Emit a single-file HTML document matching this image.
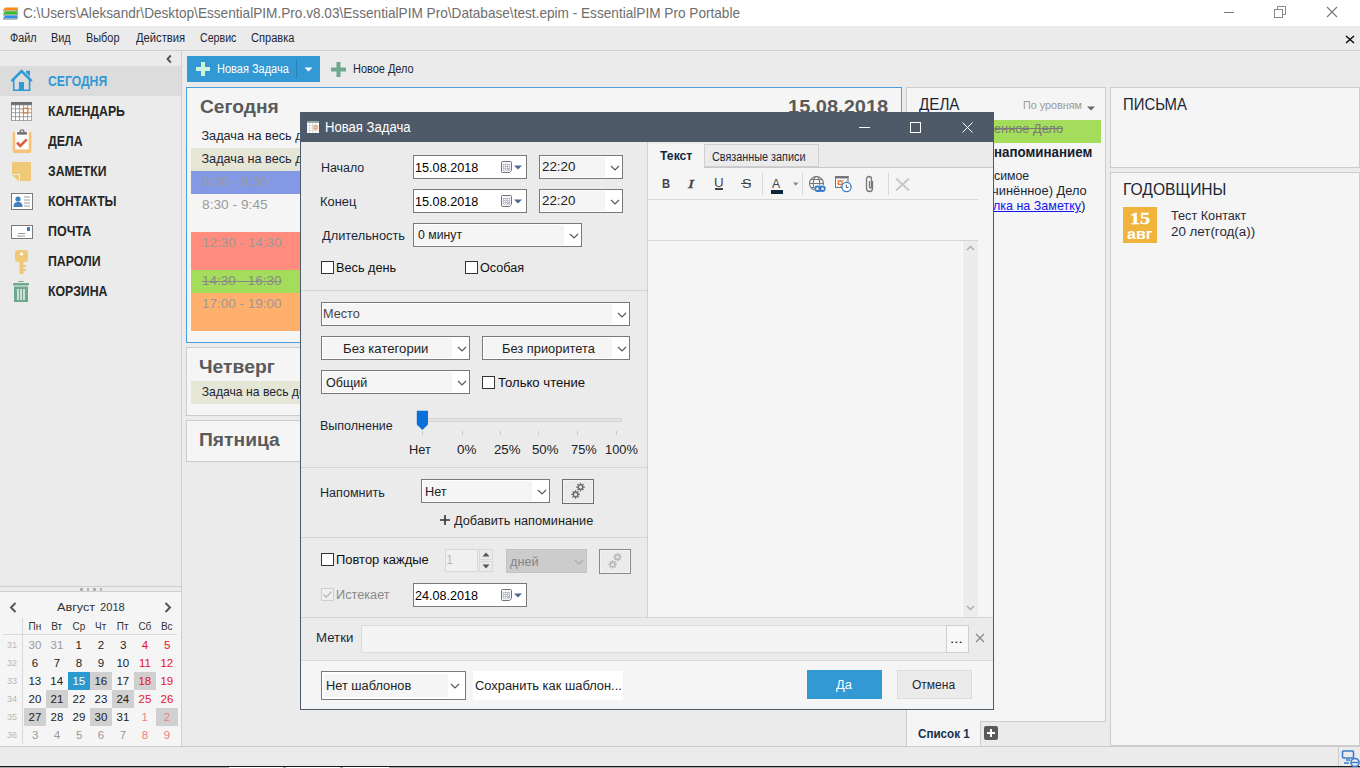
<!DOCTYPE html>
<html><head><meta charset="utf-8"><style>
html,body{margin:0;padding:0;}
body{width:1360px;height:768px;position:relative;overflow:hidden;background:#ebebeb;font-family:"Liberation Sans",sans-serif;}
.b{position:absolute;display:block;}
.t{position:absolute;white-space:nowrap;line-height:1;transform-origin:0 0;}
</style></head><body>
<div class="b" style="left:0px;top:0px;width:1360px;height:26px;background:#ffffff;"></div>
<div class="b" style="left:0px;top:26px;width:1360px;height:24px;background:#ebebeb;"></div>
<div class="b" style="left:0px;top:50px;width:1360px;height:1px;background:#cfcfcf;"></div>
<div class="b" style="left:0px;top:51px;width:1360px;height:695px;background:#ebebeb;"></div>
<svg class="b" style="left:2px;top:6px;" width="18" height="15" viewBox="0 0 18 15"><g fill="#777"><path d="M1 4.5H14L16 2.5V4L14.5 5.5H1Z"/><path d="M1 8.5H14L16 6.5V8L14.5 9.5H1Z"/><path d="M1 12.5H14L16 10.5V12L14.5 13.5H1Z"/></g><path d="M3 1.5H16.5L14 4.2H1Z" fill="#f88c10"/><path d="M3 5.5H16.5L14 8.2H1Z" fill="#30c020"/><path d="M3 9.5H16.5L14 12.2H1Z" fill="#3090f0"/></svg>
<div class="t" style="left:22.52px;top:6.00px;font-size:14.3px;color:#6e6e6e;transform:scaleX(0.9529);">C:\Users\Aleksandr\Desktop\EssentialPIM.Pro.v8.03\EssentialPIM Pro\Database\test.epim - EssentialPIM Pro Portable</div>
<div class="b" style="left:1224px;top:12px;width:10px;height:1px;background:#777;"></div>
<svg class="b" style="left:1274px;top:6px;" width="12" height="12" viewBox="0 0 12 12"><rect x="0.5" y="3.5" width="8" height="8" fill="none" stroke="#888"/><path d="M3.5 3.5V0.5H11.5V8.5H8.5" fill="none" stroke="#888"/></svg>
<svg class="b" style="left:1326px;top:6px;" width="12" height="12" viewBox="0 0 12 12"><path d="M1 1L11 11M11 1L1 11" stroke="#777" stroke-width="1.1"/></svg>
<div class="t" style="left:10.07px;top:32.00px;font-size:12.5px;color:#1b2736;transform:scaleX(0.8644);">Файл</div>
<div class="t" style="left:51.13px;top:32.00px;font-size:12.5px;color:#1b2736;transform:scaleX(0.8721);">Вид</div>
<div class="t" style="left:86.13px;top:32.00px;font-size:12.5px;color:#1b2736;transform:scaleX(0.8716);">Выбор</div>
<div class="t" style="left:135.75px;top:32.00px;font-size:12.5px;color:#1b2736;transform:scaleX(0.8981);">Действия</div>
<div class="t" style="left:200.07px;top:32.00px;font-size:12.5px;color:#1b2736;transform:scaleX(0.8512);">Сервис</div>
<div class="t" style="left:250.81px;top:32.00px;font-size:12.5px;color:#1b2736;transform:scaleX(0.8866);">Справка</div>
<svg class="b" style="left:1345px;top:35px;" width="10" height="9" viewBox="0 0 10 9"><path d="M1 1L9 8M9 1L1 8" stroke="#111" stroke-width="1.6"/></svg>
<div class="b" style="left:181px;top:51px;width:1px;height:695px;background:#d0d0d0;"></div>
<svg class="b" style="left:165px;top:54px;" width="8" height="10" viewBox="0 0 8 10"><path d="M5.8 1.5L2.5 5L5.8 8.5" fill="none" stroke="#555" stroke-width="1.9"/></svg>
<div class="b" style="left:0px;top:66px;width:181px;height:30px;background:#dcdcdc;"></div>
<div class="t" style="left:47.87px;top:74.00px;font-size:14px;color:#3399d4;font-weight:bold;transform:scaleX(0.8689);">СЕГОДНЯ</div>
<div class="t" style="left:47.64px;top:104.00px;font-size:14px;color:#262626;font-weight:bold;transform:scaleX(0.8786);">КАЛЕНДАРЬ</div>
<div class="t" style="left:48.30px;top:134.00px;font-size:14px;color:#262626;font-weight:bold;transform:scaleX(0.8846);">ДЕЛА</div>
<div class="t" style="left:48.08px;top:164.00px;font-size:14px;color:#262626;font-weight:bold;transform:scaleX(0.8712);">ЗАМЕТКИ</div>
<div class="t" style="left:47.64px;top:194.00px;font-size:14px;color:#262626;font-weight:bold;transform:scaleX(0.8740);">КОНТАКТЫ</div>
<div class="t" style="left:47.63px;top:224.00px;font-size:14px;color:#262626;font-weight:bold;transform:scaleX(0.8905);">ПОЧТА</div>
<div class="t" style="left:47.64px;top:254.00px;font-size:14px;color:#262626;font-weight:bold;transform:scaleX(0.8807);">ПАРОЛИ</div>
<div class="t" style="left:47.64px;top:284.00px;font-size:14px;color:#262626;font-weight:bold;transform:scaleX(0.8797);">КОРЗИНА</div>
<svg class="b" style="left:10px;top:68px;" width="24" height="24" viewBox="0 0 24 24"><path d="M1.5 13.2L11.6 3L21.7 13.2" fill="none" stroke="#2e9ad8" stroke-width="2.6" stroke-linejoin="miter"/><path d="M16 4.5V2.8H20V8.8Z" fill="#2e9ad8"/><path d="M3.7 12V22.2H19.6V12" fill="none" stroke="#2e9ad8" stroke-width="1.6"/><rect x="8.9" y="14" width="5.1" height="9" fill="#2e9ad8"/></svg>
<svg class="b" style="left:11px;top:102px;" width="21" height="19" viewBox="0 0 21 19"><rect x="0" y="0" width="21" height="19" fill="#8a8a8a"/><rect x="0" y="0" width="21" height="2.6" fill="#6e6e6e"/><rect x="0.90" y="3.30" width="3.25" height="3.15" fill="#fff"/><rect x="0.90" y="7.25" width="3.25" height="3.15" fill="#fff"/><rect x="0.90" y="11.20" width="3.25" height="3.15" fill="#fff"/><rect x="0.90" y="15.15" width="3.25" height="3.15" fill="#fff"/><rect x="4.95" y="3.30" width="3.25" height="3.15" fill="#fff"/><rect x="4.95" y="7.25" width="3.25" height="3.15" fill="#fff"/><rect x="4.95" y="11.20" width="3.25" height="3.15" fill="#fff"/><rect x="4.95" y="15.15" width="3.25" height="3.15" fill="#fff"/><rect x="9.00" y="3.30" width="3.25" height="3.15" fill="#fff"/><rect x="9.00" y="7.25" width="3.25" height="3.15" fill="#fff"/><rect x="9.00" y="11.20" width="3.25" height="3.15" fill="#fff"/><rect x="9.00" y="15.15" width="3.25" height="3.15" fill="#fff"/><rect x="13.05" y="3.30" width="3.25" height="3.15" fill="#fff"/><rect x="13.05" y="7.25" width="3.25" height="3.15" fill="#fff"/><rect x="13.05" y="11.20" width="3.25" height="3.15" fill="#fff"/><rect x="13.05" y="15.15" width="3.25" height="3.15" fill="#fff"/><rect x="17.10" y="3.30" width="3.25" height="3.15" fill="#fff"/><rect x="17.10" y="7.25" width="3.25" height="3.15" fill="#fff"/><rect x="17.10" y="11.20" width="3.25" height="3.15" fill="#fff"/><rect x="17.10" y="15.15" width="3.25" height="3.15" fill="#fff"/><rect x="12.3" y="6.4" width="4.6" height="4.4" fill="#fff" stroke="#e07a2c" stroke-width="1.3"/></svg>
<svg class="b" style="left:12px;top:129px;" width="20" height="24" viewBox="0 0 20 24"><path d="M2 3V21.5Q2 23 3.5 23H16.5Q18 23 18 21.5V3" fill="none" stroke="#f9c278" stroke-width="2.4"/><rect x="3.2" y="3" width="13.6" height="17.5" fill="#fff"/><path d="M0.8 3H3.2V20.5H16.8V3H19.2V21.5Q19.2 24 17 24H3Q0.8 24 0.8 21.5Z" fill="#f9c278"/><rect x="5" y="3.2" width="10" height="2.4" fill="#6e6e6e"/><circle cx="10" cy="2.8" r="1.9" fill="none" stroke="#6e6e6e" stroke-width="1.3"/><path d="M5 13.5L8.3 16.8L14.8 10.3" fill="none" stroke="#de5c38" stroke-width="2.6"/></svg>
<svg class="b" style="left:11px;top:161px;" width="21" height="21" viewBox="0 0 21 21"><path d="M1 1H20V20H9V13H1Z" fill="#efc878"/><path d="M1 14H8V20.5Z" fill="#efc878"/></svg>
<svg class="b" style="left:11px;top:193px;" width="22" height="17" viewBox="0 0 22 17"><rect x="0.5" y="0.5" width="21" height="16" fill="#fff" stroke="#7a7a7a"/><circle cx="7" cy="6" r="2.6" fill="#3f7fc0"/><path d="M2.5 14C2.5 10 4.5 9 7 9C9.5 9 11.5 10 11.5 14Z" fill="#3f7fc0"/><path d="M13 4H19M13 7H19M13 10H19M13 13H19" stroke="#9a9a9a" stroke-width="1"/></svg>
<svg class="b" style="left:11px;top:225px;" width="22" height="14" viewBox="0 0 22 14"><rect x="0.5" y="0.5" width="21" height="13" fill="#fff" stroke="#7a7a7a"/><rect x="16" y="2" width="3" height="4" fill="#3f7fc0"/><path d="M7 8.5H14M6 11H14" stroke="#9a9a9a" stroke-width="1"/></svg>
<svg class="b" style="left:15px;top:250px;" width="13" height="24" viewBox="0 0 13 24"><rect x="0" y="0" width="13" height="12" rx="3" fill="#f0c878"/><circle cx="6.5" cy="4" r="1.6" fill="#fff"/><rect x="4.5" y="11" width="4" height="13" fill="#f0c878"/><rect x="8" y="15" width="3" height="2" fill="#f0c878"/><rect x="8" y="19" width="3" height="2" fill="#f0c878"/></svg>
<svg class="b" style="left:12px;top:281px;" width="18" height="21" viewBox="0 0 18 21"><rect x="6.5" y="0" width="5" height="1" fill="#6fa890"/><rect x="1" y="2" width="16" height="2.6" rx="0.8" fill="#6fa890"/><rect x="2" y="5.5" width="14" height="15.5" fill="#6fa890"/><path d="M6 8V19M9 8V19M12 8V19" stroke="#fff" stroke-width="1.3"/></svg>
<div class="b" style="left:0px;top:586px;width:182px;height:1px;background:#cccccc;"></div>
<div class="b" style="left:80.0px;top:588px;width:2.5px;height:2.5px;background:#aaaaaa;border-radius:50%;"></div>
<div class="b" style="left:86.5px;top:588px;width:2.5px;height:2.5px;background:#aaaaaa;border-radius:50%;"></div>
<div class="b" style="left:93.0px;top:588px;width:2.5px;height:2.5px;background:#aaaaaa;border-radius:50%;"></div>
<div class="b" style="left:99.5px;top:588px;width:2.5px;height:2.5px;background:#aaaaaa;border-radius:50%;"></div>
<div class="b" style="left:0px;top:591px;width:182px;height:155px;background:#f5f5f5;"></div>
<div class="b" style="left:0px;top:591px;width:182px;height:1px;background:#d0d0d0;"></div>
<div class="b" style="left:181px;top:591px;width:1px;height:155px;background:#d0d0d0;"></div>
<svg class="b" style="left:9px;top:602px;" width="8" height="11" viewBox="0 0 8 11"><path d="M6.5 1L2 5.5L6.5 10" fill="none" stroke="#555" stroke-width="2"/></svg>
<svg class="b" style="left:164px;top:602px;" width="8" height="11" viewBox="0 0 8 11"><path d="M1.5 1L6 5.5L1.5 10" fill="none" stroke="#555" stroke-width="2"/></svg>
<div class="t" style="left:57.00px;top:602.00px;font-size:11.5px;color:#333;transform:scaleX(1.1014);">Август</div>
<div class="t" style="left:99.52px;top:602.00px;font-size:11.5px;color:#333;transform:scaleX(0.9697);">2018</div>
<div class="b" style="left:22px;top:618px;width:1px;height:126px;background:#d8d8d8;"></div>
<div class="b" style="left:3px;top:634px;width:174px;height:1px;background:#d8d8d8;"></div>
<div class="t" style="left:28.50px;top:622.00px;font-size:10px;color:#333;">Пн</div>
<div class="t" style="left:51.25px;top:622.00px;font-size:10px;color:#333;">Вт</div>
<div class="t" style="left:72.50px;top:622.00px;font-size:10px;color:#333;">Ср</div>
<div class="t" style="left:95.00px;top:622.00px;font-size:10px;color:#333;">Чт</div>
<div class="t" style="left:116.75px;top:622.00px;font-size:10px;color:#333;">Пт</div>
<div class="t" style="left:138.38px;top:622.00px;font-size:10px;color:#333;">Сб</div>
<div class="t" style="left:160.88px;top:622.00px;font-size:10px;color:#333;">Вс</div>
<div class="t" style="left:7.00px;top:641.00px;font-size:9px;color:#b8b8b8;">31</div>
<div class="t" style="left:28.62px;top:640.00px;font-size:11.5px;color:#999999;">30</div>
<div class="t" style="left:50.62px;top:640.00px;font-size:11.5px;color:#999999;">31</div>
<div class="t" style="left:75.62px;top:640.00px;font-size:11.5px;color:#222222;">1</div>
<div class="t" style="left:97.75px;top:640.00px;font-size:11.5px;color:#222222;">2</div>
<div class="t" style="left:119.88px;top:640.00px;font-size:11.5px;color:#222222;">3</div>
<div class="t" style="left:141.75px;top:640.00px;font-size:11.5px;color:#e8141e;">4</div>
<div class="t" style="left:163.88px;top:640.00px;font-size:11.5px;color:#e8141e;">5</div>
<div class="t" style="left:7.00px;top:659.00px;font-size:9px;color:#b8b8b8;">32</div>
<div class="t" style="left:31.75px;top:658.00px;font-size:11.5px;color:#222222;">6</div>
<div class="t" style="left:53.75px;top:658.00px;font-size:11.5px;color:#222222;">7</div>
<div class="t" style="left:75.75px;top:658.00px;font-size:11.5px;color:#222222;">8</div>
<div class="t" style="left:97.75px;top:658.00px;font-size:11.5px;color:#222222;">9</div>
<div class="t" style="left:116.38px;top:658.00px;font-size:11.5px;color:#222222;">10</div>
<div class="t" style="left:138.88px;top:658.00px;font-size:11.5px;color:#e8141e;">11</div>
<div class="t" style="left:160.38px;top:658.00px;font-size:11.5px;color:#e8141e;">12</div>
<div class="t" style="left:7.00px;top:677.00px;font-size:9px;color:#b8b8b8;">33</div>
<div class="t" style="left:28.38px;top:676.00px;font-size:11.5px;color:#222222;">13</div>
<div class="t" style="left:50.25px;top:676.00px;font-size:11.5px;color:#222222;">14</div>
<div class="b" style="left:68px;top:672px;width:22px;height:18px;background:#2b9ad0;"></div>
<div class="t" style="left:72.38px;top:676.00px;font-size:11.5px;color:#ffffff;">15</div>
<div class="b" style="left:90px;top:672px;width:22px;height:18px;background:#d0d0d0;"></div>
<div class="t" style="left:94.38px;top:676.00px;font-size:11.5px;color:#222222;">16</div>
<div class="t" style="left:116.38px;top:676.00px;font-size:11.5px;color:#222222;">17</div>
<div class="b" style="left:134px;top:672px;width:22px;height:18px;background:#d0d0d0;"></div>
<div class="t" style="left:138.38px;top:676.00px;font-size:11.5px;color:#e8141e;">18</div>
<div class="t" style="left:160.38px;top:676.00px;font-size:11.5px;color:#e8141e;">19</div>
<div class="t" style="left:7.00px;top:695.00px;font-size:9px;color:#b8b8b8;">34</div>
<div class="t" style="left:28.50px;top:694.00px;font-size:11.5px;color:#222222;">20</div>
<div class="b" style="left:46px;top:690px;width:22px;height:18px;background:#d0d0d0;"></div>
<div class="t" style="left:50.50px;top:694.00px;font-size:11.5px;color:#222222;">21</div>
<div class="t" style="left:72.50px;top:694.00px;font-size:11.5px;color:#222222;">22</div>
<div class="t" style="left:94.50px;top:694.00px;font-size:11.5px;color:#222222;">23</div>
<div class="b" style="left:112px;top:690px;width:22px;height:18px;background:#d0d0d0;"></div>
<div class="t" style="left:116.38px;top:694.00px;font-size:11.5px;color:#222222;">24</div>
<div class="t" style="left:138.50px;top:694.00px;font-size:11.5px;color:#e8141e;">25</div>
<div class="t" style="left:160.50px;top:694.00px;font-size:11.5px;color:#e8141e;">26</div>
<div class="t" style="left:7.00px;top:713.00px;font-size:9px;color:#b8b8b8;">35</div>
<div class="b" style="left:24px;top:708px;width:22px;height:18px;background:#d0d0d0;"></div>
<div class="t" style="left:28.50px;top:712.00px;font-size:11.5px;color:#222222;">27</div>
<div class="t" style="left:50.50px;top:712.00px;font-size:11.5px;color:#222222;">28</div>
<div class="t" style="left:72.50px;top:712.00px;font-size:11.5px;color:#222222;">29</div>
<div class="b" style="left:90px;top:708px;width:22px;height:18px;background:#d0d0d0;"></div>
<div class="t" style="left:94.62px;top:712.00px;font-size:11.5px;color:#222222;">30</div>
<div class="t" style="left:116.62px;top:712.00px;font-size:11.5px;color:#222222;">31</div>
<div class="t" style="left:141.62px;top:712.00px;font-size:11.5px;color:#f08080;">1</div>
<div class="b" style="left:156px;top:708px;width:22px;height:18px;background:#d0d0d0;"></div>
<div class="t" style="left:163.75px;top:712.00px;font-size:11.5px;color:#f08080;">2</div>
<div class="t" style="left:7.00px;top:731.00px;font-size:9px;color:#b8b8b8;">36</div>
<div class="t" style="left:31.88px;top:730.00px;font-size:11.5px;color:#999999;">3</div>
<div class="t" style="left:53.75px;top:730.00px;font-size:11.5px;color:#999999;">4</div>
<div class="t" style="left:75.88px;top:730.00px;font-size:11.5px;color:#999999;">5</div>
<div class="t" style="left:97.75px;top:730.00px;font-size:11.5px;color:#999999;">6</div>
<div class="t" style="left:119.75px;top:730.00px;font-size:11.5px;color:#999999;">7</div>
<div class="t" style="left:141.75px;top:730.00px;font-size:11.5px;color:#f08080;">8</div>
<div class="t" style="left:163.75px;top:730.00px;font-size:11.5px;color:#f08080;">9</div>
<div class="b" style="left:0px;top:746px;width:1360px;height:1px;background:#cccccc;"></div>
<div class="b" style="left:0px;top:747px;width:1360px;height:19px;background:#ebebeb;"></div>
<div class="b" style="left:0px;top:766px;width:1360px;height:1px;background:#1a1a1a;"></div>
<div class="b" style="left:0px;top:767px;width:1360px;height:1px;background:#a8a8ae;"></div>
<div class="b" style="left:229px;top:767px;width:54px;height:1px;background:#ffffff;"></div>
<div class="b" style="left:286px;top:767px;width:54px;height:1px;background:#ffffff;"></div>
<div class="b" style="left:343px;top:767px;width:46px;height:1px;background:#ffffff;"></div>
<div class="b" style="left:1338px;top:747px;width:1px;height:19px;background:#cccccc;"></div>
<svg class="b" style="left:1341px;top:750px;" width="19" height="17" viewBox="0 0 19 17"><rect x="1.5" y="1" width="11" height="7" rx="1" fill="none" stroke="#3a7cc8" stroke-width="1.6"/><path d="M5 10H9M3 13H8" stroke="#3a7cc8" stroke-width="1.6"/><circle cx="14" cy="12.5" r="4" fill="none" stroke="#3a7cc8" stroke-width="1.6"/><path d="M11 12.5H17" stroke="#3a7cc8" stroke-width="1.4"/></svg>
<div class="b" style="left:187px;top:56px;width:133px;height:26px;background:#3399d4;"></div>
<div class="b" style="left:296px;top:60px;width:1px;height:18px;background:#2a7fb3;"></div>
<svg class="b" style="left:195px;top:61px;" width="16" height="16" viewBox="0 0 16 16"><rect x="6" y="1" width="4" height="14" fill="#ccf5dc"/><rect x="1" y="6" width="14" height="4" fill="#ccf5dc"/></svg>
<div class="t" style="left:217.37px;top:63.00px;font-size:12.5px;color:#ffffff;transform:scaleX(0.8793);">Новая Задача</div>
<svg class="b" style="left:304px;top:67px;" width="9" height="5" viewBox="0 0 9 5"><path d="M0.5 0.5H8.5L4.5 4.5Z" fill="#ffffff"/></svg>
<svg class="b" style="left:331px;top:62px;" width="15" height="15" viewBox="0 0 15 15"><rect x="5.5" y="0" width="4" height="15" fill="#6fa88f"/><rect x="0" y="5.5" width="15" height="4" fill="#6fa88f"/></svg>
<div class="t" style="left:352.72px;top:63.00px;font-size:12.5px;color:#1b2736;transform:scaleX(0.8768);">Новое Дело</div>
<div class="b" style="left:186px;top:87px;width:716px;height:256px;background:#f5f5f5;box-shadow:inset 0 0 0 1px #4aa0e0;"></div>
<div class="t" style="left:199.97px;top:98.00px;font-size:18px;color:#5a5a5a;font-weight:bold;transform:scaleX(1.0667);">Сегодня</div>
<div class="t" style="left:787.89px;top:98.00px;font-size:18px;color:#5a5a5a;font-weight:bold;transform:scaleX(1.1119);">15.08.2018</div>
<div class="t" style="left:201.45px;top:130.00px;font-size:12.7px;color:#1b2736;">Задача на весь день</div>
<div class="b" style="left:191px;top:148px;width:706px;height:23px;background:#e6e6d6;"></div>
<div class="t" style="left:201.45px;top:153.00px;font-size:12.7px;color:#1b2736;">Задача на весь день</div>
<div class="b" style="left:191px;top:171px;width:706px;height:23px;background:#8399e6;"></div>
<div class="t" style="left:201.96px;top:176.00px;font-size:12.7px;color:#9a9a9a;transform:scaleX(1.0826);">8:30 - 9:30</div>
<div class="t" style="left:201.96px;top:199.00px;font-size:12.7px;color:#9a9a9a;transform:scaleX(1.0826);">8:30 - 9:45</div>
<div class="b" style="left:191px;top:232px;width:706px;height:38px;background:#ff8c7c;"></div>
<div class="t" style="left:201.90px;top:237.00px;font-size:12.7px;color:#9a9a9a;transform:scaleX(1.0650);">12:30 - 14:30</div>
<div class="b" style="left:191px;top:270px;width:706px;height:23px;background:#a4dc5c;"></div>
<div class="t" style="left:201.90px;top:275.00px;font-size:12.7px;color:#8a8a8a;transform:scaleX(1.0650);text-decoration:line-through;">14:30 - 16:30</div>
<div class="b" style="left:191px;top:293px;width:706px;height:38px;background:#ffb06c;"></div>
<div class="t" style="left:201.90px;top:298.00px;font-size:12.7px;color:#9a9a9a;transform:scaleX(1.0650);">17:00 - 19:00</div>
<div class="b" style="left:186px;top:347px;width:716px;height:69px;background:#f5f5f5;box-shadow:inset 0 0 0 1px #cccccc;"></div>
<div class="t" style="left:199.39px;top:358.00px;font-size:18px;color:#5a5a5a;font-weight:bold;transform:scaleX(1.0748);">Четверг</div>
<div class="b" style="left:191px;top:381px;width:706px;height:23px;background:#e6e6d6;"></div>
<div class="t" style="left:201.75px;top:386.00px;font-size:12.2px;color:#1b2736;">Задача на весь день</div>
<div class="b" style="left:186px;top:420px;width:716px;height:42px;background:#f5f5f5;box-shadow:inset 0 0 0 1px #cccccc;"></div>
<div class="t" style="left:199.13px;top:431.00px;font-size:18px;color:#5a5a5a;font-weight:bold;transform:scaleX(1.0702);">Пятница</div>
<div class="b" style="left:906px;top:87px;width:200px;height:635px;background:#f5f5f5;box-shadow:inset 0 0 0 1px #cccccc;"></div>
<div class="t" style="left:919.30px;top:96.00px;font-size:17px;color:#1b2736;transform:scaleX(0.8923);">ДЕЛА</div>
<div class="t" style="left:1022.68px;top:100.00px;font-size:11.3px;color:#9a9a9a;transform:scaleX(0.9558);">По уровням</div>
<svg class="b" style="left:1087px;top:106px;" width="8" height="5" viewBox="0 0 8 5"><path d="M0 0.5H8L4 4.5Z" fill="#666"/></svg>
<div class="b" style="left:911px;top:120px;width:190px;height:23px;background:#a4dc5c;"></div>
<div class="t" style="left:994.11px;top:122.00px;font-size:13px;color:#7a7a7a;transform:scaleX(0.9834);text-decoration:line-through;">енное Дело</div>
<div class="t" style="left:993.79px;top:145.00px;font-size:14px;color:#14202c;font-weight:bold;transform:scaleX(0.9514);">напоминанием</div>
<div class="t" style="left:993.84px;top:169.00px;font-size:13.6px;color:#1b2736;transform:scaleX(0.9053);">симое</div>
<div class="t" style="left:992.29px;top:184.00px;font-size:13.6px;color:#1b2736;transform:scaleX(0.9457);">чинённое) Дело</div>
<div class="t" style="left:992.50px;top:199.00px;font-size:13.6px;color:#1414ee;transform:scaleX(0.9195);text-decoration:underline;">лка на Заметку</div>
<div class="t" style="left:1081.00px;top:199.00px;font-size:13.6px;color:#1b2736;">)</div>
<div class="b" style="left:906px;top:721px;width:200px;height:25px;background:#ebebeb;"></div>
<div class="b" style="left:906px;top:721px;width:1px;height:25px;background:#cccccc;"></div>
<div class="b" style="left:906px;top:721px;width:74px;height:25px;background:#f5f5f5;"></div>
<div class="b" style="left:906px;top:721px;width:1px;height:25px;background:#cccccc;"></div>
<div class="b" style="left:980px;top:721px;width:126px;height:1px;background:#cccccc;"></div>
<div class="b" style="left:980px;top:721px;width:1px;height:25px;background:#cccccc;"></div>
<div class="t" style="left:917.53px;top:728.00px;font-size:12.5px;color:#14304c;font-weight:bold;transform:scaleX(0.9315);">Список 1</div>
<svg class="b" style="left:984px;top:726px;" width="14" height="14" viewBox="0 0 14 14"><rect x="0" y="0" width="14" height="14" rx="2" fill="#5a5a5a"/><path d="M7 3V11M3 7H11" stroke="#fff" stroke-width="2"/></svg>
<div class="b" style="left:1110px;top:87px;width:250px;height:81px;background:#f5f5f5;box-shadow:inset 0 0 0 1px #cccccc;"></div>
<div class="t" style="left:1123.11px;top:96.00px;font-size:17px;color:#1b2736;transform:scaleX(0.8750);">ПИСЬМА</div>
<div class="b" style="left:1110px;top:172px;width:250px;height:574px;background:#f5f5f5;box-shadow:inset 0 0 0 1px #cccccc;"></div>
<div class="t" style="left:1123.05px;top:181.00px;font-size:17px;color:#1b2736;transform:scaleX(0.9182);">ГОДОВЩИНЫ</div>
<div class="b" style="left:1123px;top:207px;width:34px;height:36px;background:#f0b43c;"></div>
<div class="t" style="left:1129.57px;top:211.00px;font-size:16.5px;color:#ffffff;font-weight:bold;font-family:'Liberation Serif',serif;transform:scaleX(1.2203);-webkit-text-stroke:0.3px #fff;">15</div>
<div class="t" style="left:1126.74px;top:226.00px;font-size:15.5px;color:#ffffff;font-weight:bold;transform:scaleX(1.0309);">авг</div>
<div class="t" style="left:1171.25px;top:210.00px;font-size:12.5px;color:#2a2a36;transform:scaleX(1.0135);">Тест Контакт</div>
<div class="t" style="left:1170.97px;top:226.00px;font-size:12.5px;color:#2a2a36;transform:scaleX(1.0675);">20 лет(год(а))</div>
<div class="b" style="left:300px;top:112px;width:694px;height:598px;background:#ebebeb;"></div>
<div class="b" style="left:300px;top:112px;width:694px;height:30px;background:#4f5a68;"></div>
<div class="b" style="left:300px;top:112px;width:1px;height:598px;background:#4f5a68;"></div>
<div class="b" style="left:993px;top:112px;width:1px;height:598px;background:#4f5a68;"></div>
<div class="b" style="left:300px;top:709px;width:694px;height:1px;background:#4f5a68;"></div>
<svg class="b" style="left:307px;top:121px;" width="12" height="12" viewBox="0 0 12 12"><rect x="0" y="0" width="12" height="12" fill="#ffffff"/><rect x="0" y="0" width="12" height="2" fill="#9aa"/><path d="M2.5 2V12" stroke="#ccc" stroke-width="0.6"/><path d="M5.5 2V12" stroke="#ccc" stroke-width="0.6"/><path d="M8.5 2V12" stroke="#ccc" stroke-width="0.6"/><path d="M0 4.5H12" stroke="#ccc" stroke-width="0.6"/><path d="M0 7.0H12" stroke="#ccc" stroke-width="0.6"/><path d="M0 9.5H12" stroke="#ccc" stroke-width="0.6"/><rect x="7" y="5" width="3" height="3" fill="none" stroke="#e8762c" stroke-width="0.8"/></svg>
<div class="t" style="left:325.26px;top:120.00px;font-size:14px;color:#ffffff;transform:scaleX(0.9359);">Новая Задача</div>
<div class="b" style="left:859px;top:127px;width:11px;height:1px;background:#ffffff;"></div>
<svg class="b" style="left:909px;top:121px;" width="13" height="13" viewBox="0 0 13 13"><rect x="1.5" y="1.5" width="10" height="10" fill="none" stroke="#fff" stroke-width="1"/></svg>
<svg class="b" style="left:961px;top:121px;" width="13" height="13" viewBox="0 0 13 13"><path d="M1.5 1.5L11.5 11.5M11.5 1.5L1.5 11.5" stroke="#fff" stroke-width="1"/></svg>
<div class="b" style="left:647px;top:142px;width:346px;height:567px;background:#f5f5f5;"></div>
<div class="b" style="left:647px;top:142px;width:1px;height:475px;background:#d0d0d0;"></div>
<div class="b" style="left:648px;top:142px;width:345px;height:25px;background:#ebebeb;"></div>
<div class="b" style="left:648px;top:167px;width:345px;height:1px;background:#c8c8c8;"></div>
<div class="b" style="left:648px;top:144px;width:56px;height:24px;background:#f5f5f5;"></div>
<div class="b" style="left:704px;top:144px;width:115px;height:23px;background:#ebebeb;box-shadow:inset 0 0 0 1px #cfcfcf;"></div>
<div class="t" style="left:659.80px;top:150.00px;font-size:12.5px;color:#102840;font-weight:bold;transform:scaleX(0.9758);">Текст</div>
<div class="t" style="left:712.37px;top:151.00px;font-size:12.5px;color:#1b2736;transform:scaleX(0.8665);">Связанные записи</div>
<div class="b" style="left:648px;top:199px;width:330px;height:1px;background:#d6d6d6;"></div>
<div class="b" style="left:648px;top:240px;width:330px;height:1px;background:#d6d6d6;"></div>
<div class="b" style="left:963px;top:241px;width:15px;height:376px;background:#ececec;"></div>
<div class="b" style="left:962px;top:241px;width:1px;height:376px;background:#fbfbfb;"></div>
<svg class="b" style="left:966px;top:245px;" width="9" height="6" viewBox="0 0 9 6"><path d="M1 5L4.5 1.5L8 5" fill="none" stroke="#aaa" stroke-width="1.3"/></svg>
<svg class="b" style="left:966px;top:605px;" width="9" height="6" viewBox="0 0 9 6"><path d="M1 1L4.5 4.5L8 1" fill="none" stroke="#aaa" stroke-width="1.3"/></svg>
<div class="t" style="left:661.55px;top:177.00px;font-size:13px;color:#444;font-weight:bold;transform:scaleX(0.8606);">B</div>
<div class="t" style="left:688.33px;top:177.00px;font-size:13.5px;color:#444;font-family:'Liberation Serif',serif;transform:scaleX(1.3091);font-style:italic;-webkit-text-stroke:0.4px #444;">I</div>
<div class="t" style="left:714.16px;top:177.00px;font-size:12px;color:#444;transform:scaleX(1.1143);">U</div>
<div class="b" style="left:715px;top:188px;width:8px;height:1.5px;background:#444;"></div>
<div class="t" style="left:741.55px;top:177.00px;font-size:13px;color:#444;transform:scaleX(1.0968);">S</div>
<div class="b" style="left:741px;top:182.5px;width:10px;height:1.2px;background:#444;"></div>
<div class="b" style="left:762px;top:173px;width:1px;height:22px;background:#d8d8d8;"></div>
<div class="b" style="left:802px;top:173px;width:1px;height:22px;background:#d8d8d8;"></div>
<div class="b" style="left:888px;top:173px;width:1px;height:22px;background:#d8d8d8;"></div>
<div class="t" style="left:772.40px;top:178.00px;font-size:12.5px;color:#444;transform:scaleX(0.9765);">A</div>
<div class="b" style="left:771px;top:190px;width:12px;height:4px;background:#0a2a3a;"></div>
<svg class="b" style="left:793px;top:182px;" width="6" height="4" viewBox="0 0 6 4"><path d="M0 0.5H5.5L2.75 3.8Z" fill="#888"/></svg>
<svg class="b" style="left:808px;top:175px;" width="18" height="18" viewBox="0 0 18 18"><g fill="none" stroke="#777" stroke-width="1.1"><circle cx="8.5" cy="8.5" r="7"/><ellipse cx="8.5" cy="8.5" rx="3.2" ry="7"/><path d="M1.5 8.5H15.5M2.8 4.5H14.2M2.8 12.5H14.2"/></g><rect x="6" y="10" width="12" height="8" fill="#f5f5f5"/><g fill="none" stroke="#3a7cc8" stroke-width="1.8"><rect x="7.2" y="11.5" width="5.5" height="4.5" rx="2.2"/><rect x="11.3" y="11.5" width="5.5" height="4.5" rx="2.2"/></g></svg>
<svg class="b" style="left:834px;top:175px;" width="18" height="18" viewBox="0 0 18 18"><rect x="1.5" y="1.5" width="12.5" height="11" fill="#fff" stroke="#777" stroke-width="1"/><rect x="1" y="1" width="13.5" height="2.5" fill="#777"/><g fill="#aaa"><rect x="3" y="5" width="1" height="1"/><rect x="6" y="5" width="1" height="1"/><rect x="9" y="5" width="1" height="1"/><rect x="12" y="5" width="1" height="1"/><rect x="3" y="8" width="1" height="1"/><rect x="3" y="11" width="1" height="1"/><rect x="6" y="11" width="1" height="1"/></g><rect x="4.5" y="6" width="3.5" height="3.5" fill="none" stroke="#e8762c" stroke-width="1.3"/><circle cx="12.5" cy="12" r="4.6" fill="#fff" stroke="#3a7cc8" stroke-width="1.3"/><path d="M12.3 9.5V12.4H14.5" fill="none" stroke="#555" stroke-width="1"/></svg>
<svg class="b" style="left:864px;top:175px;" width="11" height="18" viewBox="0 0 11 18"><path d="M8.5 6V13.5A3 3 0 0 1 2.5 13.5V4A2.5 2.5 0 0 1 7.5 4V12A1 1 0 0 1 5.5 12V6" fill="none" stroke="#777" stroke-width="1.3"/></svg>
<svg class="b" style="left:895px;top:178px;" width="15" height="13" viewBox="0 0 15 13"><path d="M1 0.5L14 12.5M14 0.5L1 12.5" stroke="#c8c8c8" stroke-width="2"/></svg>
<div class="b" style="left:301px;top:290px;width:346px;height:1px;background:#d5d5d5;"></div>
<div class="b" style="left:301px;top:467px;width:346px;height:1px;background:#d5d5d5;"></div>
<div class="b" style="left:301px;top:537px;width:346px;height:1px;background:#d5d5d5;"></div>
<div class="t" style="left:320.51px;top:162.00px;font-size:12.5px;color:#1b2736;transform:scaleX(0.9929);">Начало</div>
<div class="b" style="left:413px;top:155px;width:114px;height:24px;background:#ffffff;box-shadow:inset 0 0 0 1px #7a7a7a;"></div>
<svg class="b" style="left:501px;top:161px;" width="12" height="13" viewBox="0 0 12 13"><path d="M1.5 0.5H9.5A1 1 0 0 1 10.5 1.5V9.5L8.5 11.5H1.5A1 1 0 0 1 0.5 10.5V1.5A1 1 0 0 1 1.5 0.5Z" fill="#f2f5fb" stroke="#7a7070"/><rect x="2" y="3" width="7" height="6.5" fill="#b4bac8"/><g fill="#fff"><rect x="2.8" y="3.8" width="1.2" height="1.2"/><rect x="4.9" y="3.8" width="1.2" height="1.2"/><rect x="7" y="3.8" width="1.2" height="1.2"/><rect x="2.8" y="5.8" width="1.2" height="1.2"/><rect x="4.9" y="5.8" width="1.2" height="1.2"/><rect x="7" y="5.8" width="1.2" height="1.2"/><rect x="2.8" y="7.8" width="1.2" height="1.2"/><rect x="4.9" y="7.8" width="1.2" height="1.2"/></g></svg>
<svg class="b" style="left:514px;top:165px;" width="8" height="5" viewBox="0 0 8 5"><path d="M0 0.5H8L4 4.5Z" fill="#4a6890"/></svg>
<div class="t" style="left:415.04px;top:162.00px;font-size:12.5px;color:#000;transform:scaleX(1.0122);">15.08.2018</div>
<div class="b" style="left:539px;top:155px;width:84px;height:24px;background:#ffffff;box-shadow:inset 0 0 0 1px #7a7a7a;"></div>
<div class="b" style="left:541px;top:157px;width:64px;height:20px;background:#f5f5f5;"></div>
<svg class="b" style="left:610px;top:165.0px;" width="10" height="6" viewBox="0 0 10 6"><path d="M1 1L5 5L9 1" fill="none" stroke="#555" stroke-width="1.1"/></svg>
<div class="t" style="left:541.87px;top:161.00px;font-size:12.5px;color:#222;transform:scaleX(1.0678);">22:20</div>
<div class="t" style="left:320.47px;top:196.00px;font-size:12.5px;color:#1b2736;transform:scaleX(1.0294);">Конец</div>
<div class="b" style="left:413px;top:189px;width:114px;height:24px;background:#ffffff;box-shadow:inset 0 0 0 1px #7a7a7a;"></div>
<svg class="b" style="left:501px;top:195px;" width="12" height="13" viewBox="0 0 12 13"><path d="M1.5 0.5H9.5A1 1 0 0 1 10.5 1.5V9.5L8.5 11.5H1.5A1 1 0 0 1 0.5 10.5V1.5A1 1 0 0 1 1.5 0.5Z" fill="#f2f5fb" stroke="#7a7070"/><rect x="2" y="3" width="7" height="6.5" fill="#b4bac8"/><g fill="#fff"><rect x="2.8" y="3.8" width="1.2" height="1.2"/><rect x="4.9" y="3.8" width="1.2" height="1.2"/><rect x="7" y="3.8" width="1.2" height="1.2"/><rect x="2.8" y="5.8" width="1.2" height="1.2"/><rect x="4.9" y="5.8" width="1.2" height="1.2"/><rect x="7" y="5.8" width="1.2" height="1.2"/><rect x="2.8" y="7.8" width="1.2" height="1.2"/><rect x="4.9" y="7.8" width="1.2" height="1.2"/></g></svg>
<svg class="b" style="left:514px;top:199px;" width="8" height="5" viewBox="0 0 8 5"><path d="M0 0.5H8L4 4.5Z" fill="#4a6890"/></svg>
<div class="t" style="left:415.04px;top:196.00px;font-size:12.5px;color:#000;transform:scaleX(1.0122);">15.08.2018</div>
<div class="b" style="left:539px;top:189px;width:84px;height:24px;background:#ffffff;box-shadow:inset 0 0 0 1px #7a7a7a;"></div>
<div class="b" style="left:541px;top:191px;width:64px;height:20px;background:#f5f5f5;"></div>
<svg class="b" style="left:610px;top:199.0px;" width="10" height="6" viewBox="0 0 10 6"><path d="M1 1L5 5L9 1" fill="none" stroke="#555" stroke-width="1.1"/></svg>
<div class="t" style="left:541.87px;top:195.00px;font-size:12.5px;color:#222;transform:scaleX(1.0678);">22:20</div>
<div class="t" style="left:321.50px;top:230.00px;font-size:12.5px;color:#1b2736;transform:scaleX(1.0236);">Длительность</div>
<div class="b" style="left:413px;top:223px;width:169px;height:24px;background:#ffffff;box-shadow:inset 0 0 0 1px #7a7a7a;"></div>
<div class="b" style="left:415px;top:225px;width:149px;height:20px;background:#f5f5f5;"></div>
<svg class="b" style="left:569px;top:233.0px;" width="10" height="6" viewBox="0 0 10 6"><path d="M1 1L5 5L9 1" fill="none" stroke="#555" stroke-width="1.1"/></svg>
<div class="t" style="left:418.35px;top:229.00px;font-size:12.5px;color:#222;transform:scaleX(0.9832);">0 минут</div>
<div class="b" style="left:321px;top:261px;width:13px;height:13px;background:#ffffff;box-shadow:inset 0 0 0 1px #333;"></div>
<div class="t" style="left:335.98px;top:262.00px;font-size:12.5px;color:#111;transform:scaleX(1.0165);">Весь день</div>
<div class="b" style="left:465px;top:261px;width:13px;height:13px;background:#ffffff;box-shadow:inset 0 0 0 1px #333;"></div>
<div class="t" style="left:480.49px;top:262.00px;font-size:12.5px;color:#111;transform:scaleX(1.0118);">Особая</div>
<div class="b" style="left:321px;top:302px;width:309px;height:24px;background:#ffffff;box-shadow:inset 0 0 0 1px #7a7a7a;"></div>
<div class="b" style="left:323px;top:304px;width:289px;height:20px;background:#f5f5f5;"></div>
<svg class="b" style="left:617px;top:312.0px;" width="10" height="6" viewBox="0 0 10 6"><path d="M1 1L5 5L9 1" fill="none" stroke="#555" stroke-width="1.1"/></svg>
<div class="t" style="left:323.29px;top:308.00px;font-size:12.5px;color:#444;transform:scaleX(1.0129);">Место</div>
<div class="b" style="left:321px;top:336px;width:149px;height:24px;background:#ffffff;box-shadow:inset 0 0 0 1px #7a7a7a;"></div>
<div class="b" style="left:323px;top:338px;width:129px;height:20px;background:#f5f5f5;"></div>
<svg class="b" style="left:457px;top:346.0px;" width="10" height="6" viewBox="0 0 10 6"><path d="M1 1L5 5L9 1" fill="none" stroke="#555" stroke-width="1.1"/></svg>
<div class="t" style="left:343.25px;top:343.00px;font-size:12.5px;color:#222;transform:scaleX(1.0516);">Без категории</div>
<div class="b" style="left:482px;top:336px;width:148px;height:24px;background:#ffffff;box-shadow:inset 0 0 0 1px #7a7a7a;"></div>
<div class="b" style="left:484px;top:338px;width:128px;height:20px;background:#f5f5f5;"></div>
<svg class="b" style="left:617px;top:346.0px;" width="10" height="6" viewBox="0 0 10 6"><path d="M1 1L5 5L9 1" fill="none" stroke="#555" stroke-width="1.1"/></svg>
<div class="t" style="left:502.27px;top:343.00px;font-size:12.5px;color:#222;transform:scaleX(1.0291);">Без приоритета</div>
<div class="b" style="left:321px;top:370px;width:149px;height:24px;background:#ffffff;box-shadow:inset 0 0 0 1px #7a7a7a;"></div>
<div class="b" style="left:323px;top:372px;width:129px;height:20px;background:#f5f5f5;"></div>
<svg class="b" style="left:457px;top:380.0px;" width="10" height="6" viewBox="0 0 10 6"><path d="M1 1L5 5L9 1" fill="none" stroke="#555" stroke-width="1.1"/></svg>
<div class="t" style="left:325.70px;top:377.00px;font-size:12.5px;color:#222;transform:scaleX(1.0050);">Общий</div>
<div class="b" style="left:482px;top:376px;width:13px;height:13px;background:#ffffff;box-shadow:inset 0 0 0 1px #333;"></div>
<div class="t" style="left:497.84px;top:377.00px;font-size:12.5px;color:#111;transform:scaleX(1.0492);">Только чтение</div>
<div class="t" style="left:320.00px;top:420.00px;font-size:12.5px;color:#1b2736;">Выполнение</div>
<div class="b" style="left:423px;top:418px;width:199px;height:4px;background:#e2e2e2;box-shadow:inset 0 0 0 1px #d4d4d4;"></div>
<svg class="b" style="left:416px;top:410px;" width="13" height="21" viewBox="0 0 13 21"><path d="M0.8 0.8H12V14.5L6.4 20L0.8 14.5Z" fill="#0a6fd8"/></svg>
<div class="b" style="left:422px;top:431px;width:1px;height:4px;background:#c8c8c8;"></div>
<div class="b" style="left:462px;top:431px;width:1px;height:4px;background:#c8c8c8;"></div>
<div class="b" style="left:500px;top:431px;width:1px;height:4px;background:#c8c8c8;"></div>
<div class="b" style="left:538px;top:431px;width:1px;height:4px;background:#c8c8c8;"></div>
<div class="b" style="left:577px;top:431px;width:1px;height:4px;background:#c8c8c8;"></div>
<div class="b" style="left:616px;top:431px;width:1px;height:4px;background:#c8c8c8;"></div>
<div class="t" style="left:408.98px;top:444.00px;font-size:12.5px;color:#222;transform:scaleX(1.0222);">Нет</div>
<div class="t" style="left:456.73px;top:444.00px;font-size:12.5px;color:#222;transform:scaleX(1.0743);">0%</div>
<div class="t" style="left:494.27px;top:444.00px;font-size:12.5px;color:#222;transform:scaleX(1.0598);">25%</div>
<div class="t" style="left:532.37px;top:444.00px;font-size:12.5px;color:#222;transform:scaleX(1.0598);">50%</div>
<div class="t" style="left:570.99px;top:444.00px;font-size:12.5px;color:#222;transform:scaleX(1.0268);">75%</div>
<div class="t" style="left:604.73px;top:444.00px;font-size:12.5px;color:#222;transform:scaleX(1.0276);">100%</div>
<div class="t" style="left:319.99px;top:487.00px;font-size:12.5px;color:#1b2736;transform:scaleX(1.0063);">Напомнить</div>
<div class="b" style="left:421px;top:479px;width:129px;height:24px;background:#ffffff;box-shadow:inset 0 0 0 1px #7a7a7a;"></div>
<div class="b" style="left:423px;top:481px;width:109px;height:20px;background:#f5f5f5;"></div>
<svg class="b" style="left:537px;top:489.0px;" width="10" height="6" viewBox="0 0 10 6"><path d="M1 1L5 5L9 1" fill="none" stroke="#555" stroke-width="1.1"/></svg>
<div class="t" style="left:425.08px;top:486.00px;font-size:12.5px;color:#222;transform:scaleX(1.0173);">Нет</div>
<div class="b" style="left:562px;top:479px;width:32px;height:25px;background:#ebebeb;box-shadow:inset 0 0 0 1px #6e6e6e;"></div>
<div class="b" style="left:563px;top:480px;width:30px;height:23px;background:transparent;box-shadow:inset 0 0 0 1px #f3f3f3;"></div>
<svg class="b" style="left:562px;top:479px;" width="32" height="25" viewBox="0 0 32 25"><path fill-rule="evenodd" fill="#707070" d="M21.36 6.91 L21.54 7.47 L22.86 7.51 L22.86 8.69 L21.54 8.73 L21.36 9.29 L21.09 9.80 L22.00 10.77 L21.17 11.60 L20.20 10.69 L19.69 10.96 L19.13 11.14 L19.09 12.46 L17.91 12.46 L17.87 11.14 L17.31 10.96 L16.80 10.69 L15.83 11.60 L15.00 10.77 L15.91 9.80 L15.64 9.29 L15.46 8.73 L14.14 8.69 L14.14 7.51 L15.46 7.47 L15.64 6.91 L15.91 6.40 L15.00 5.43 L15.83 4.60 L16.80 5.51 L17.31 5.24 L17.87 5.06 L17.91 3.74 L19.09 3.74 L19.13 5.06 L19.69 5.24 L20.20 5.51 L21.17 4.60 L22.00 5.43 L21.09 6.40Z M20.00 8.10 A1.5 1.5 0 1 0 17.00 8.10 A1.5 1.5 0 1 0 20.00 8.10Z M16.46 14.21 L16.64 14.77 L17.96 14.81 L17.96 15.99 L16.64 16.03 L16.46 16.59 L16.19 17.10 L17.10 18.07 L16.27 18.90 L15.30 17.99 L14.79 18.26 L14.23 18.44 L14.19 19.76 L13.01 19.76 L12.97 18.44 L12.41 18.26 L11.90 17.99 L10.93 18.90 L10.10 18.07 L11.01 17.10 L10.74 16.59 L10.56 16.03 L9.24 15.99 L9.24 14.81 L10.56 14.77 L10.74 14.21 L11.01 13.70 L10.10 12.73 L10.93 11.90 L11.90 12.81 L12.41 12.54 L12.97 12.36 L13.01 11.04 L14.19 11.04 L14.23 12.36 L14.79 12.54 L15.30 12.81 L16.27 11.90 L17.10 12.73 L16.19 13.70Z M15.10 15.40 A1.5 1.5 0 1 0 12.10 15.40 A1.5 1.5 0 1 0 15.10 15.40Z"/></svg>
<svg class="b" style="left:440px;top:515px;" width="10" height="10" viewBox="0 0 10 10"><path d="M5 0V10M0 5H10" stroke="#333" stroke-width="1.6"/></svg>
<div class="t" style="left:453.90px;top:515.00px;font-size:12.5px;color:#222;transform:scaleX(1.0199);">Добавить напоминание</div>
<div class="b" style="left:321px;top:553px;width:13px;height:13px;background:#ffffff;box-shadow:inset 0 0 0 1px #333;"></div>
<div class="t" style="left:335.96px;top:554.00px;font-size:12.5px;color:#111;transform:scaleX(1.0364);">Повтор каждые</div>
<div class="b" style="left:445px;top:549px;width:33px;height:23px;background:#f0f0f0;box-shadow:inset 0 0 0 1px #d8d8d8;"></div>
<div class="t" style="left:446.25px;top:554.00px;font-size:12px;color:#b8b8b8;">1</div>
<div class="b" style="left:479px;top:549px;width:14px;height:11px;background:#ebebeb;box-shadow:inset 0 0 0 1px #d8d8d8;"></div>
<div class="b" style="left:479px;top:561px;width:14px;height:11px;background:#ebebeb;box-shadow:inset 0 0 0 1px #d8d8d8;"></div>
<svg class="b" style="left:482px;top:552px;" width="8" height="5" viewBox="0 0 8 5"><path d="M0.5 4.5L4 0.5L7.5 4.5Z" fill="#555"/></svg>
<svg class="b" style="left:482px;top:564px;" width="8" height="5" viewBox="0 0 8 5"><path d="M0.5 0.5L4 4.5L7.5 0.5Z" fill="#555"/></svg>
<div class="b" style="left:506px;top:549px;width:81px;height:24px;background:#cccccc;box-shadow:inset 0 0 0 1px #c2c2c2;"></div>
<div class="t" style="left:509.90px;top:556.00px;font-size:12.5px;color:#858585;transform:scaleX(1.0182);">дней</div>
<svg class="b" style="left:574px;top:559px;" width="10" height="6" viewBox="0 0 10 6"><path d="M1 1L5 5L9 1" fill="none" stroke="#aaa" stroke-width="1.1"/></svg>
<div class="b" style="left:599px;top:549px;width:32px;height:25px;background:#ebebeb;box-shadow:inset 0 0 0 1px #8a8a8a;"></div>
<div class="b" style="left:600px;top:550px;width:30px;height:23px;background:transparent;box-shadow:inset 0 0 0 1px #f3f3f3;"></div>
<svg class="b" style="left:599px;top:549px;" width="32" height="25" viewBox="0 0 32 25"><path fill-rule="evenodd" fill="#b8b8b8" d="M21.36 6.91 L21.54 7.47 L22.86 7.51 L22.86 8.69 L21.54 8.73 L21.36 9.29 L21.09 9.80 L22.00 10.77 L21.17 11.60 L20.20 10.69 L19.69 10.96 L19.13 11.14 L19.09 12.46 L17.91 12.46 L17.87 11.14 L17.31 10.96 L16.80 10.69 L15.83 11.60 L15.00 10.77 L15.91 9.80 L15.64 9.29 L15.46 8.73 L14.14 8.69 L14.14 7.51 L15.46 7.47 L15.64 6.91 L15.91 6.40 L15.00 5.43 L15.83 4.60 L16.80 5.51 L17.31 5.24 L17.87 5.06 L17.91 3.74 L19.09 3.74 L19.13 5.06 L19.69 5.24 L20.20 5.51 L21.17 4.60 L22.00 5.43 L21.09 6.40Z M20.00 8.10 A1.5 1.5 0 1 0 17.00 8.10 A1.5 1.5 0 1 0 20.00 8.10Z M16.46 14.21 L16.64 14.77 L17.96 14.81 L17.96 15.99 L16.64 16.03 L16.46 16.59 L16.19 17.10 L17.10 18.07 L16.27 18.90 L15.30 17.99 L14.79 18.26 L14.23 18.44 L14.19 19.76 L13.01 19.76 L12.97 18.44 L12.41 18.26 L11.90 17.99 L10.93 18.90 L10.10 18.07 L11.01 17.10 L10.74 16.59 L10.56 16.03 L9.24 15.99 L9.24 14.81 L10.56 14.77 L10.74 14.21 L11.01 13.70 L10.10 12.73 L10.93 11.90 L11.90 12.81 L12.41 12.54 L12.97 12.36 L13.01 11.04 L14.19 11.04 L14.23 12.36 L14.79 12.54 L15.30 12.81 L16.27 11.90 L17.10 12.73 L16.19 13.70Z M15.10 15.40 A1.5 1.5 0 1 0 12.10 15.40 A1.5 1.5 0 1 0 15.10 15.40Z"/></svg>
<div class="b" style="left:321px;top:588px;width:13px;height:13px;background:#f0f0f0;box-shadow:inset 0 0 0 1px #cfcfcf;"></div>
<svg class="b" style="left:321px;top:588px;" width="13" height="13" viewBox="0 0 13 13"><path d="M2.5 6.5L5.2 9.3L10.5 3.5" fill="none" stroke="#bbb" stroke-width="1.3"/></svg>
<div class="t" style="left:335.98px;top:589.00px;font-size:12.5px;color:#888;transform:scaleX(1.0164);">Истекает</div>
<div class="b" style="left:413px;top:583px;width:114px;height:24px;background:#ffffff;box-shadow:inset 0 0 0 1px #7a7a7a;"></div>
<svg class="b" style="left:501px;top:589px;" width="12" height="13" viewBox="0 0 12 13"><path d="M1.5 0.5H9.5A1 1 0 0 1 10.5 1.5V9.5L8.5 11.5H1.5A1 1 0 0 1 0.5 10.5V1.5A1 1 0 0 1 1.5 0.5Z" fill="#f2f5fb" stroke="#7a7070"/><rect x="2" y="3" width="7" height="6.5" fill="#b4bac8"/><g fill="#fff"><rect x="2.8" y="3.8" width="1.2" height="1.2"/><rect x="4.9" y="3.8" width="1.2" height="1.2"/><rect x="7" y="3.8" width="1.2" height="1.2"/><rect x="2.8" y="5.8" width="1.2" height="1.2"/><rect x="4.9" y="5.8" width="1.2" height="1.2"/><rect x="7" y="5.8" width="1.2" height="1.2"/><rect x="2.8" y="7.8" width="1.2" height="1.2"/><rect x="4.9" y="7.8" width="1.2" height="1.2"/></g></svg>
<svg class="b" style="left:514px;top:593px;" width="8" height="5" viewBox="0 0 8 5"><path d="M0 0.5H8L4 4.5Z" fill="#4a6890"/></svg>
<div class="t" style="left:415.30px;top:590.00px;font-size:12.5px;color:#000;transform:scaleX(1.0081);">24.08.2018</div>
<div class="b" style="left:301px;top:617px;width:692px;height:1px;background:#d5d5d5;"></div>
<div class="b" style="left:301px;top:618px;width:692px;height:42px;background:#ebebeb;"></div>
<div class="b" style="left:301px;top:660px;width:692px;height:1px;background:#d8d8d8;"></div>
<div class="t" style="left:316.44px;top:632.00px;font-size:12.5px;color:#1b2736;transform:scaleX(1.0597);">Метки</div>
<div class="b" style="left:361px;top:625px;width:586px;height:28px;background:#f4f4f4;box-shadow:inset 0 0 0 1px #dcdcdc;"></div>
<div class="b" style="left:946px;top:625px;width:23px;height:28px;background:#f8f8f8;box-shadow:inset 0 0 0 1px #cfcfcf;"></div>
<div class="t" style="left:950.26px;top:633.00px;font-size:12.5px;color:#222;transform:scaleX(1.2353);">...</div>
<svg class="b" style="left:975px;top:633px;" width="10" height="10" viewBox="0 0 10 10"><path d="M1 1L9 9M9 1L1 9" stroke="#888" stroke-width="1.2"/></svg>
<div class="b" style="left:301px;top:661px;width:692px;height:48px;background:#f5f5f5;"></div>
<div class="b" style="left:321px;top:671px;width:145px;height:29px;background:#ffffff;box-shadow:inset 0 0 0 1px #7a7a7a;"></div>
<div class="b" style="left:324px;top:674px;width:124px;height:23px;background:#f5f5f5;"></div>
<svg class="b" style="left:450px;top:683px;" width="10" height="6" viewBox="0 0 10 6"><path d="M1 1L5 5L9 1" fill="none" stroke="#555" stroke-width="1.1"/></svg>
<div class="t" style="left:326.08px;top:680.00px;font-size:12.5px;color:#222;transform:scaleX(1.0239);">Нет шаблонов</div>
<div class="b" style="left:473px;top:671px;width:150px;height:29px;background:#ffffff;"></div>
<div class="t" style="left:474.98px;top:680.00px;font-size:12.5px;color:#222;transform:scaleX(1.0305);">Сохранить как шаблон...</div>
<div class="b" style="left:807px;top:670px;width:75px;height:29px;background:#3399d4;"></div>
<div class="t" style="left:836.00px;top:679.00px;font-size:12.5px;color:#ffffff;transform:scaleX(1.0323);">Да</div>
<div class="b" style="left:897px;top:670px;width:75px;height:29px;background:#ebebeb;box-shadow:inset 0 0 0 1px #dcdcdc;"></div>
<div class="t" style="left:912.32px;top:679.00px;font-size:12.5px;color:#1b2736;transform:scaleX(0.9618);">Отмена</div>
</body></html>
